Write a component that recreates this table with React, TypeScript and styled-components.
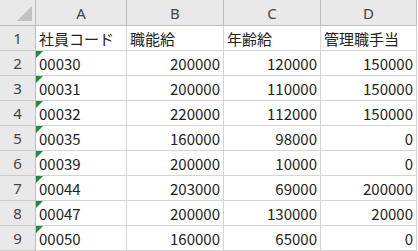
import React from "react";
import styled, { createGlobalStyle } from "styled-components";

const GlobalStyle = createGlobalStyle`
  html, body {
    margin: 0;
    padding: 0;
    background: #ffffff;
  }
`;

const Sheet = styled.div`
  display: grid;
  grid-template-columns: 36px 91px 97px 97px 96px;
  grid-auto-rows: 25px;
  grid-template-rows: 26px;
  font-family: "Noto Sans CJK JP", "Noto Sans", sans-serif;
  font-size: 15px;
  color: #222;
  width: 417px;
`;

const Corner = styled.div`
  position: relative;
  background: #e9e9e9;
  border-right: 1px solid #bdbdbd;
  border-bottom: 1px solid #bdbdbd;
  &::after {
    content: "";
    position: absolute;
    right: 3px;
    bottom: 4px;
    width: 0;
    height: 0;
    border-left: 15px solid transparent;
    border-bottom: 15px solid #c2c2c2;
  }
`;

const ColHead = styled.div`
  background: #e9e9e9;
  border-right: 1px solid #bdbdbd;
  border-bottom: 1px solid #bdbdbd;
  display: flex;
  align-items: center;
  justify-content: center;
  color: #444;
  font-family: "Noto Sans", sans-serif;
  font-size: 15px;
`;

const RowHead = styled.div`
  background: #e9e9e9;
  border-right: 1px solid #bdbdbd;
  border-bottom: 1px solid #c9c9c9;
  display: flex;
  align-items: center;
  justify-content: center;
  color: #444;
  font-family: "Noto Sans", sans-serif;
`;

const Cell = styled.div<{ $num?: boolean; $flag?: boolean }>`
  position: relative;
  border-right: 1px solid #d4d4d4;
  border-bottom: 1px solid #d4d4d4;
  display: flex;
  align-items: center;
  justify-content: ${(p) => (p.$num ? "flex-end" : "flex-start")};
  padding: 0 3px 0 3px;
  white-space: nowrap;
  overflow: hidden;
  ${(p) =>
    p.$flag &&
    `&::before {
      content: "";
      position: absolute;
      left: 0;
      top: 0;
      border-top: 7px solid #1e8a3a;
      border-right: 7px solid transparent;
    }`}
`;

const rows: [string, number, number, number][] = [
  ["00030", 200000, 120000, 150000],
  ["00031", 200000, 110000, 150000],
  ["00032", 220000, 112000, 150000],
  ["00035", 160000, 98000, 0],
  ["00039", 200000, 10000, 0],
  ["00044", 203000, 69000, 200000],
  ["00047", 200000, 130000, 20000],
  ["00050", 160000, 65000, 0],
];

export default function App() {
  return (
    <>
      <GlobalStyle />
      <Sheet>
        <Corner />
        {["A", "B", "C", "D"].map((c) => (
          <ColHead key={c}>{c}</ColHead>
        ))}
        <RowHead>1</RowHead>
        <Cell>社員コード</Cell>
        <Cell>職能給</Cell>
        <Cell>年齢給</Cell>
        <Cell>管理職手当</Cell>
        {rows.map((r, i) => (
          <React.Fragment key={r[0]}>
            <RowHead>{i + 2}</RowHead>
            <Cell $flag>{r[0]}</Cell>
            <Cell $num>{r[1]}</Cell>
            <Cell $num>{r[2]}</Cell>
            <Cell $num>{r[3]}</Cell>
          </React.Fragment>
        ))}
      </Sheet>
    </>
  );
}
